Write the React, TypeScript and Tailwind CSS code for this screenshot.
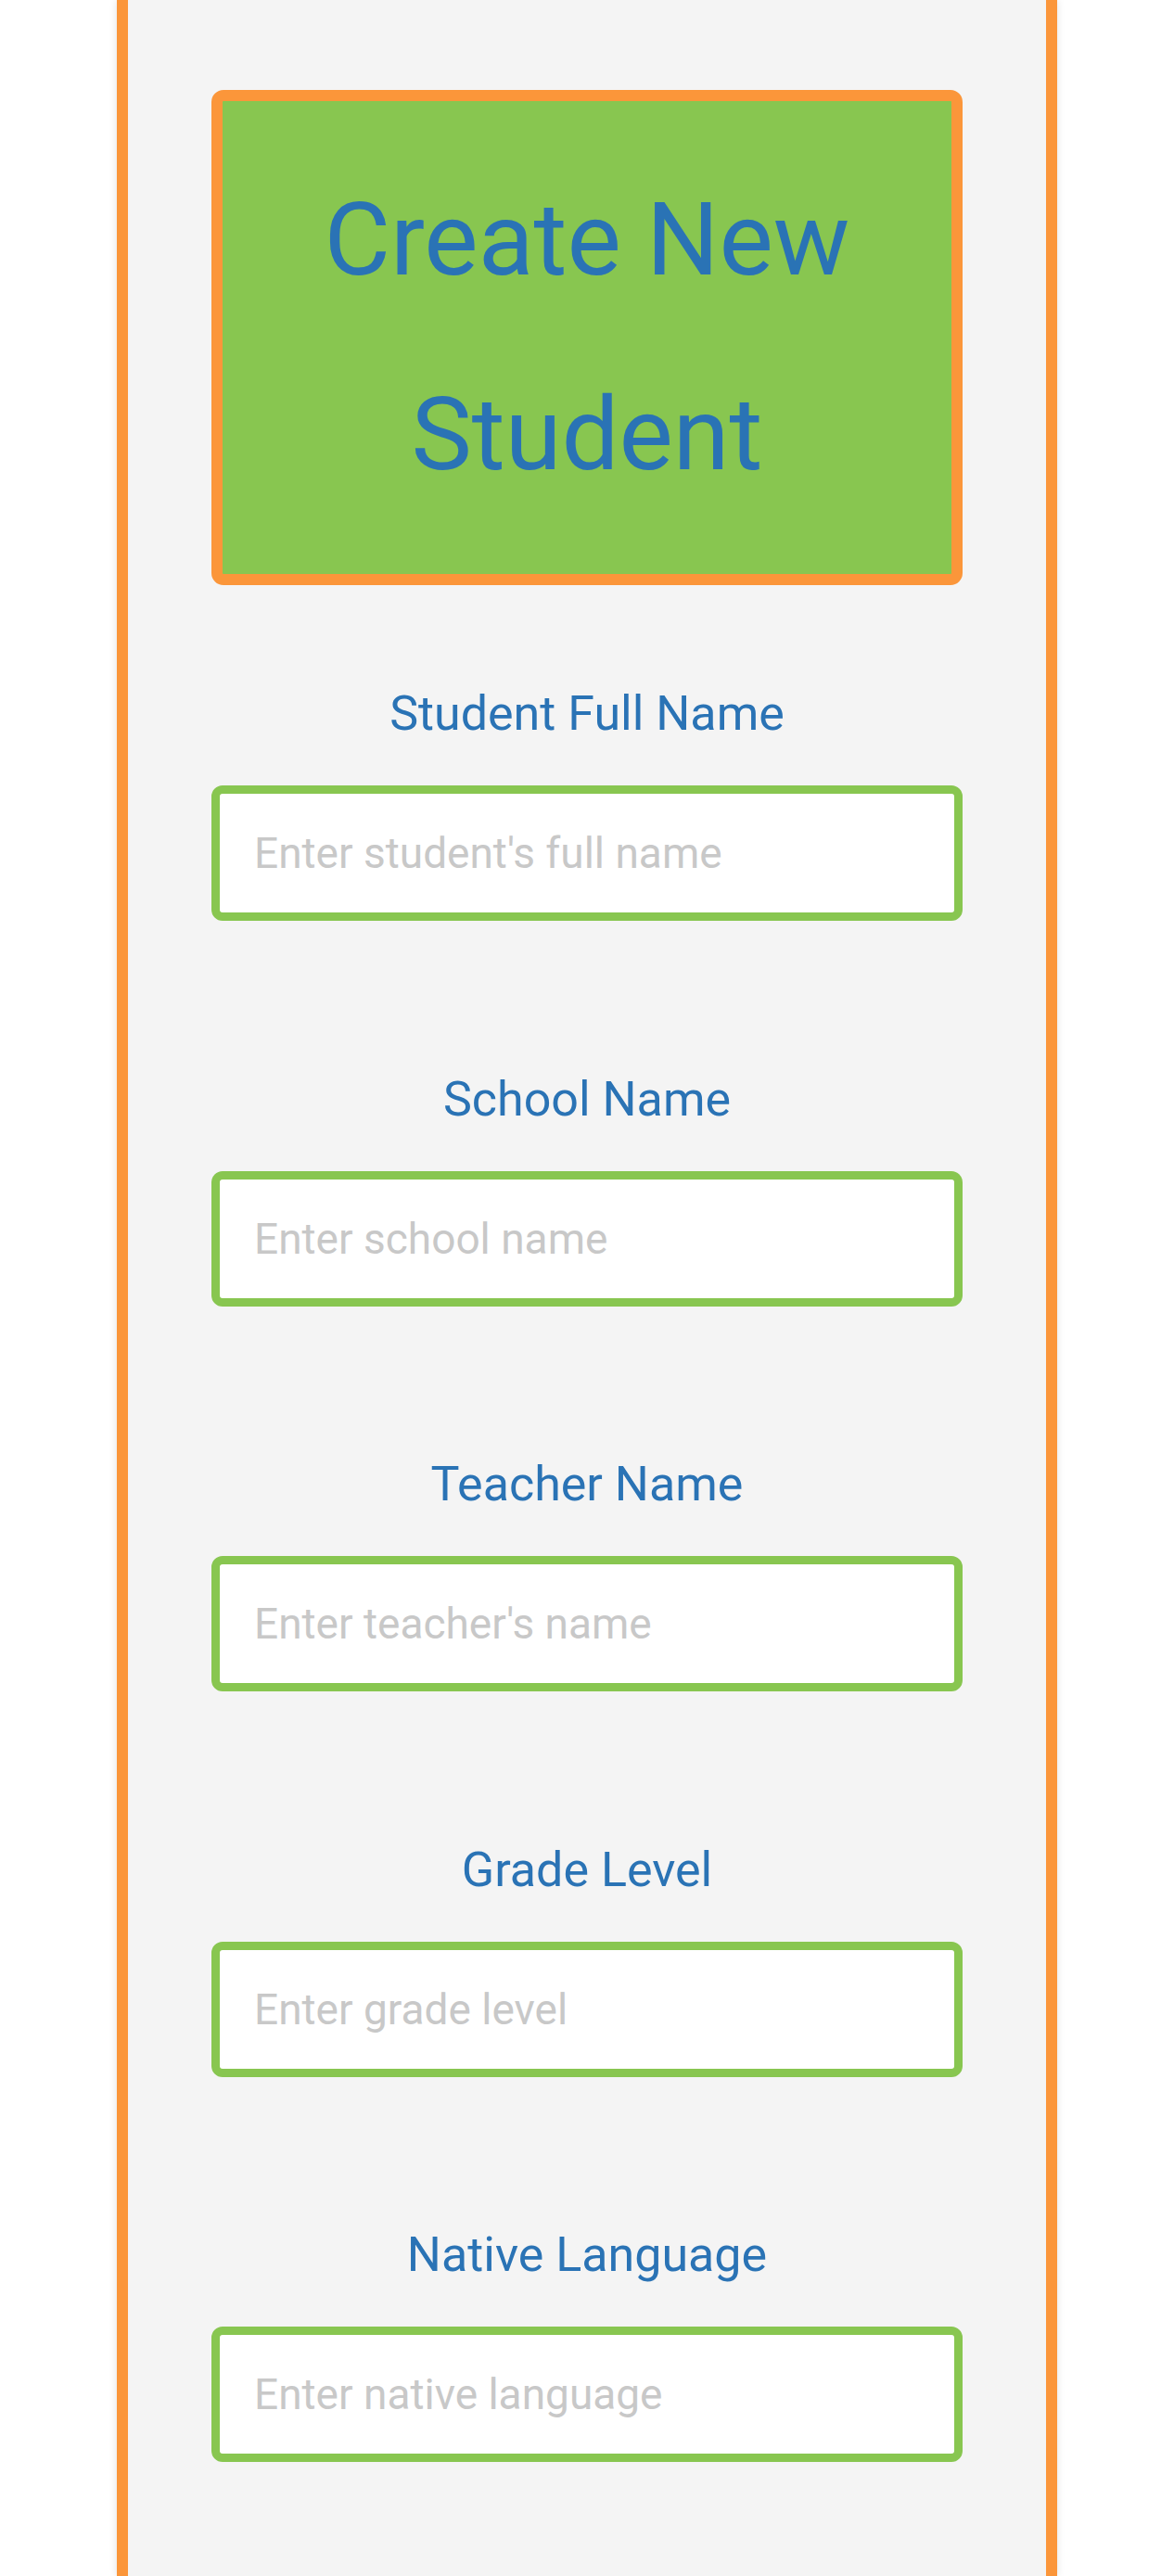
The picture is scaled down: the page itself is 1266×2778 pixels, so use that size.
import { useState } from "react";

const fields = [
  { label: "Student Full Name", placeholder: "Enter student's full name" },
  { label: "School Name", placeholder: "Enter school name" },
  { label: "Teacher Name", placeholder: "Enter teacher's name" },
  { label: "Grade Level", placeholder: "Enter grade level" },
  { label: "Native Language", placeholder: "Enter native language" },
];

export default function App() {
  const [values, setValues] = useState<string[]>(fields.map(() => ""));

  const update = (index: number, value: string) => {
    const next = [...values];
    next[index] = value;
    setValues(next);
  };

  return (
    <div className="flex min-h-screen w-full justify-center bg-white font-['Roboto',sans-serif]">
      <div className="w-[1014px] min-h-[2778px] border-x-[12px] border-[#fb963a] bg-[#f4f4f4] px-[90px] pt-[97px] pb-[120px] shadow-[0_0_8px_rgba(0,0,0,0.12)]">
        <div className="rounded-[13px] border-[12px] border-[#fb963a] bg-[#88c650] py-[45px] text-center text-[110px] leading-[210px] font-normal text-[#2a73b5]">
          Create New
          <br />
          Student
        </div>

        <div className="mt-[108px] flex flex-col gap-[161.6px]">
          {fields.map((field, index) => (
            <div key={field.label} className="flex flex-col">
              <label className="text-center text-[52px] leading-[62px] font-normal text-[#2a73b5]">
                {field.label}
              </label>
              <input
                value={values[index]}
                onChange={(e) => update(index, e.target.value)}
                placeholder={field.placeholder}
                className="mt-[46px] h-[146px] w-full rounded-[12px] border-[9px] border-[#88c650] bg-white px-[37px] text-[46px] text-[#333] outline-none placeholder:text-[#c8c8c8]"
              />
            </div>
          ))}
        </div>
      </div>
    </div>
  );
}
